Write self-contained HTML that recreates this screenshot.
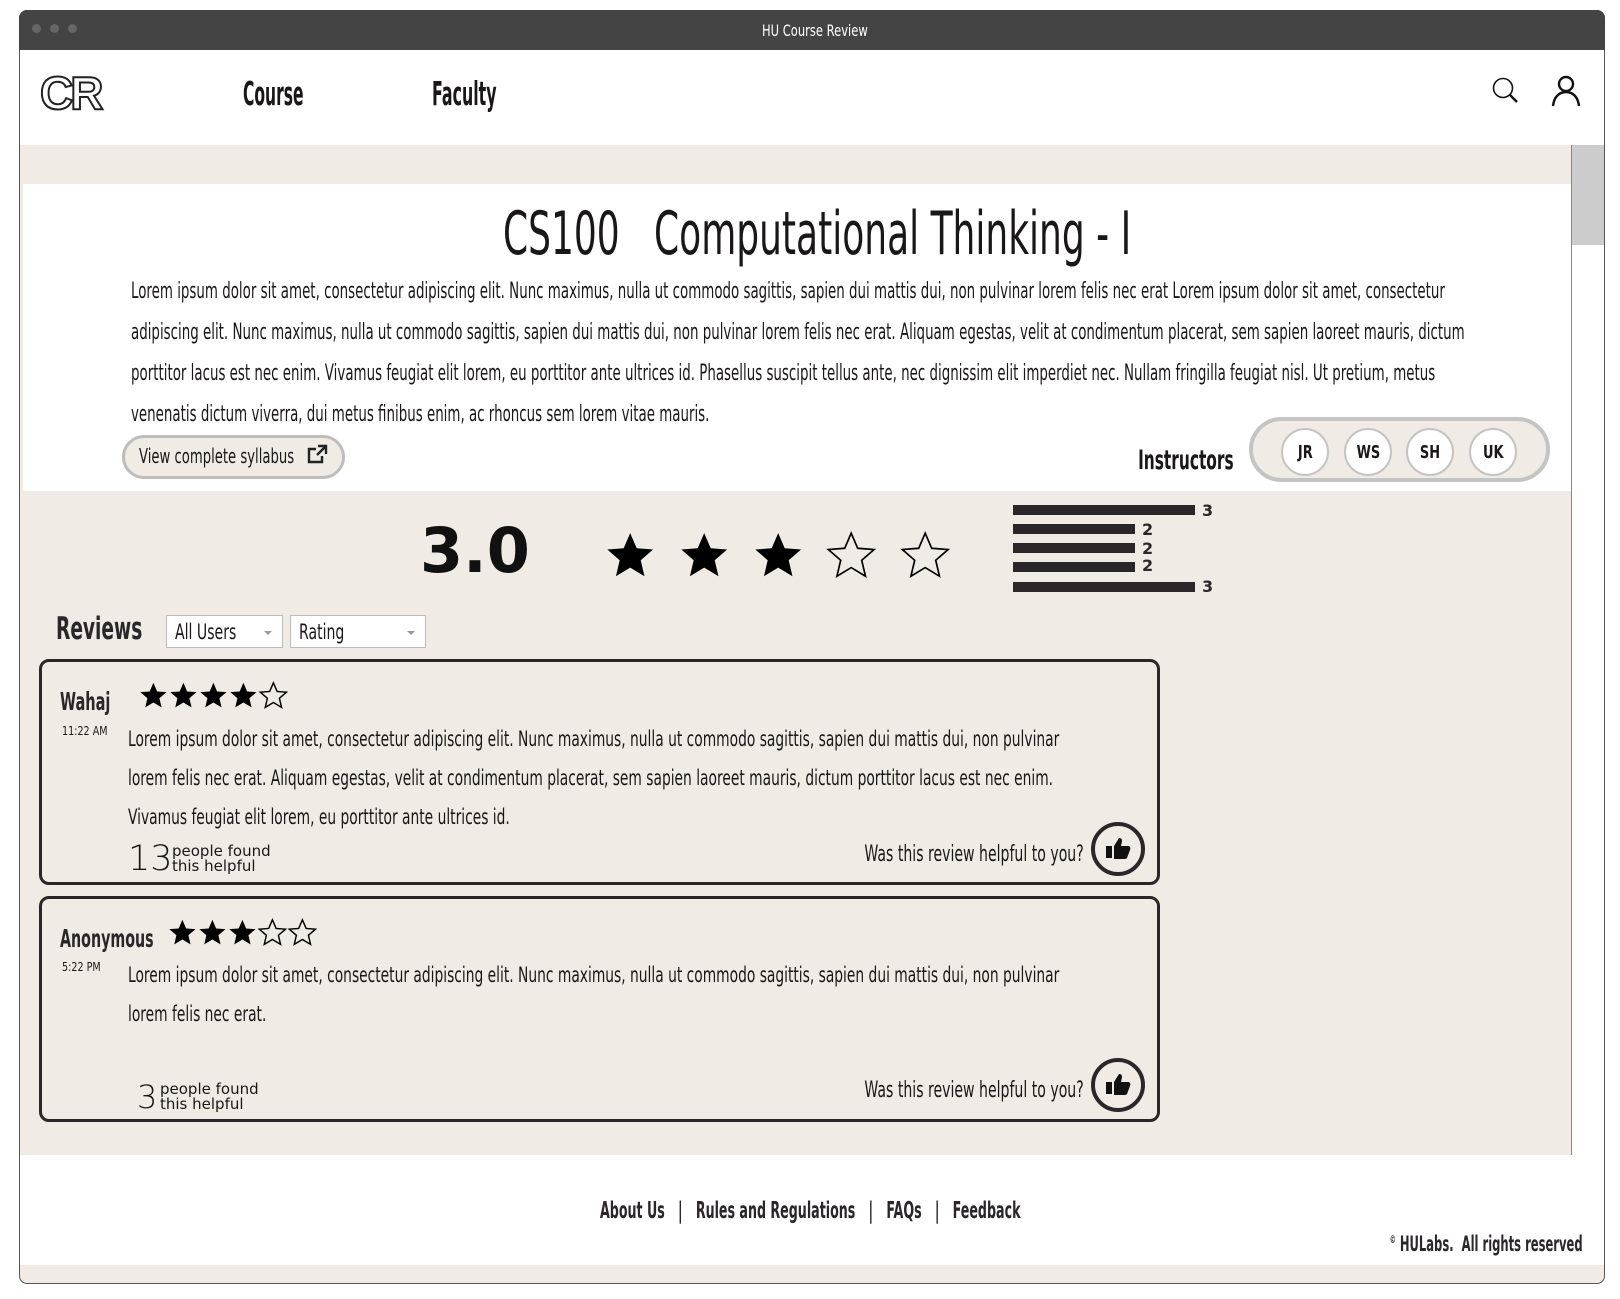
<!DOCTYPE html>
<html><head><meta charset="utf-8"><style>
*{margin:0;padding:0;box-sizing:border-box}
body{width:1620px;height:1299px;background:#fff;position:relative;overflow:hidden;font-family:"DejaVu Sans","Liberation Sans",sans-serif;color:#1a1718}
.a{position:absolute;white-space:nowrap;transform-origin:0 0}
.r{transform-origin:100% 0}
.b{font-weight:bold}
.line{font-size:22px;transform:scaleX(0.609)}
.rl{font-size:21px;transform:scaleX(0.658)}
.circ{position:absolute;width:48px;height:48px;border-radius:50%;background:#fff;border:2px solid #c4c4c4;display:flex;align-items:center;justify-content:center;top:429px}
.circ span{font-size:18px;font-weight:bold;display:inline-block;transform:scaleX(0.72)}
.bar{position:absolute;left:1013px;height:10px;background:#2a2629}
.bn{position:absolute;font-weight:bold;font-size:16px;color:#2a2629}
.card{position:absolute;left:39px;width:1121px;border:3px solid #2a2629;border-radius:10px;background:#f0ebe4}
.thumb{position:absolute;width:54px;height:54px;border:4px solid #2a2629;border-radius:50%;display:flex;align-items:center;justify-content:center}
.dd{position:absolute;top:615px;height:33px;background:#fff;border:1px solid #bbb}
.dd span{position:absolute;left:8px;top:4px;font-size:21px;transform:scaleX(0.67);transform-origin:0 0;white-space:nowrap}
.dd:after{content:"";position:absolute;right:10px;top:15px;border:4px solid transparent;border-top:4px solid #999}
</style></head><body>
<svg width="0" height="0" style="position:absolute"><defs>
<path id="st" d="M12 1.5l3.1 7.2 7.8.6-5.9 5.1 1.8 7.6L12 17.9 5.2 22l1.8-7.6L1.1 9.3l7.8-.6z"/>
</defs></svg>
<div class="a" style="left:19px;top:10px;width:1586px;height:1274px;border:1px solid #555;border-radius:8px;background:#f0ebe4"></div>
<div class="a" style="left:19px;top:10px;width:1586px;height:40px;background:#444;border-radius:8px 8px 0 0"></div>
<div class="a" style="left:32px;top:24px;width:9px;height:9px;border-radius:50%;background:#666"></div>
<div class="a" style="left:50px;top:24px;width:9px;height:9px;border-radius:50%;background:#666"></div>
<div class="a" style="left:68px;top:24px;width:9px;height:9px;border-radius:50%;background:#666"></div>
<div class="a" style="left:762px;top:21px;color:#fff;font-size:16px;transform:scaleX(0.72)">HU Course Review</div>
<div class="a" style="left:20px;top:50px;width:1584px;height:95px;background:#fff"></div>
<div class="a b" style="left:40px;top:66px;font-size:46px;color:#fff;-webkit-text-stroke:2px #222;font-family:'Liberation Sans',sans-serif;letter-spacing:-3px">CR</div>
<div class="a b" style="left:243px;top:74px;font-size:33px;transform:scaleX(0.47)">Course</div>
<div class="a b" style="left:432px;top:74px;font-size:33px;transform:scaleX(0.48)">Faculty</div>
<svg class="a" style="left:1491px;top:76px" width="30" height="30" viewBox="0 0 30 30"><circle cx="12" cy="12" r="9.5" fill="none" stroke="#111" stroke-width="1.6"/><path d="M19 19l7 7" stroke="#111" stroke-width="2.4"/></svg>
<svg class="a" style="left:1550px;top:74px" width="32" height="34" viewBox="0 0 32 34"><circle cx="16" cy="10" r="7" fill="none" stroke="#111" stroke-width="2.4"/><path d="M3 32c1-9 6-14 13-14s12 5 13 14" fill="none" stroke="#111" stroke-width="2.4"/></svg>
<div class="a" style="left:1571px;top:145px;width:1px;height:1010px;background:#888"></div>
<div class="a" style="left:1572px;top:145px;width:32px;height:1010px;background:#fff"></div>
<div class="a" style="left:1572px;top:145px;width:32px;height:100px;background:#ccc"></div>
<div class="a" style="left:23px;top:184px;width:1548px;height:307px;background:#fff"></div>
<div class="a" style="left:503px;top:199px;font-size:60px;transform:scaleX(0.60)">CS100 &nbsp; Computational Thinking - I</div>
<div class="a line" style="left:131px;top:279px">Lorem ipsum dolor sit amet, consectetur adipiscing elit. Nunc maximus, nulla ut commodo sagittis, sapien dui mattis dui, non pulvinar lorem felis nec erat Lorem ipsum dolor sit amet, consectetur</div>
<div class="a line" style="left:131px;top:320px">adipiscing elit. Nunc maximus, nulla ut commodo sagittis, sapien dui mattis dui, non pulvinar lorem felis nec erat. Aliquam egestas, velit at condimentum placerat, sem sapien laoreet mauris, dictum</div>
<div class="a line" style="left:131px;top:361px">porttitor lacus est nec enim. Vivamus feugiat elit lorem, eu porttitor ante ultrices id. Phasellus suscipit tellus ante, nec dignissim elit imperdiet nec. Nullam fringilla feugiat nisl. Ut pretium, metus</div>
<div class="a line" style="left:131px;top:402px">venenatis dictum viverra, dui metus finibus enim, ac rhoncus sem lorem vitae mauris.</div>
<div class="a" style="left:122px;top:435px;width:223px;height:44px;border:3px solid #bdbdbd;border-radius:22px;background:#f0ebe4"></div>
<div class="a" style="left:139px;top:444px;font-size:20px;transform:scaleX(0.66)">View complete syllabus</div>
<svg class="a" style="left:306px;top:444px" width="22" height="22" viewBox="0 0 22 22"><path d="M16 12v6H3V5h7" fill="none" stroke="#222" stroke-width="2.4"/><path d="M12 2h8v8M20 2l-9 9" fill="none" stroke="#222" stroke-width="2.4"/></svg>
<div class="a b r" style="right:386px;top:445px;font-size:27px;transform:scaleX(0.57)">Instructors</div>
<div class="a" style="left:1249px;top:417px;width:301px;height:65px;border:4px solid #c4c4c4;border-radius:33px;background:#f0ebe4"></div>
<div class="circ" style="left:1281px;top:428px"><span>JR</span></div>
<div class="circ" style="left:1344px;top:428px"><span>WS</span></div>
<div class="circ" style="left:1406px;top:428px"><span>SH</span></div>
<div class="circ" style="left:1469px;top:428px"><span>UK</span></div>
<div class="a b" style="left:420px;top:514px;font-size:62px;color:#111">3.0</div>
<svg class="a" style="left:603px;top:528px" width="350" height="54" viewBox="0 0 350 54">
<g transform="translate(2,2) scale(2.1)"><use href="#st" fill="#000"/></g>
<g transform="translate(76,2) scale(2.1)"><use href="#st" fill="#000"/></g>
<g transform="translate(150,2) scale(2.1)"><use href="#st" fill="#000"/></g>
<g transform="translate(223,2) scale(2.1)"><use href="#st" fill="none" stroke="#000" stroke-width="0.8"/></g>
<g transform="translate(297,2) scale(2.1)"><use href="#st" fill="none" stroke="#000" stroke-width="0.8"/></g>
</svg>
<div class="bar" style="top:505px;width:182px"></div><div class="bn" style="left:1202px;top:501px">3</div>
<div class="bar" style="top:524px;width:122px"></div><div class="bn" style="left:1142px;top:520px">2</div>
<div class="bar" style="top:543px;width:122px"></div><div class="bn" style="left:1142px;top:539px">2</div>
<div class="bar" style="top:562px;width:122px"></div><div class="bn" style="left:1142px;top:556px">2</div>
<div class="bar" style="top:582px;width:182px"></div><div class="bn" style="left:1202px;top:577px">3</div>
<div class="a b" style="left:56px;top:611px;font-size:31px;color:#2a2629;transform:scaleX(0.6)">Reviews</div>
<div class="dd" style="left:166px;width:117px"><span>All Users</span></div>
<div class="dd" style="left:290px;width:136px"><span>Rating</span></div>

<div class="card" style="top:659px;height:226px"></div>
<div class="a b" style="left:60px;top:687px;font-size:25px;color:#2a2629;transform:scaleX(0.58)">Wahaj</div>
<div class="a" style="left:62px;top:724px;font-size:12px;transform:scaleX(0.8)">11:22 AM</div>
<svg class="a" style="left:139px;top:680px" width="150" height="30" viewBox="0 0 150 30">
<g transform="translate(0,1) scale(1.2)"><use href="#st"/></g><g transform="translate(30,1) scale(1.2)"><use href="#st"/></g><g transform="translate(60,1) scale(1.2)"><use href="#st"/></g><g transform="translate(90,1) scale(1.2)"><use href="#st"/></g><g transform="translate(120,1) scale(1.2)"><use href="#st" fill="none" stroke="#000" stroke-width="1.2"/></g></svg>
<div class="a rl" style="left:128px;top:727px">Lorem ipsum dolor sit amet, consectetur adipiscing elit. Nunc maximus, nulla ut commodo sagittis, sapien dui mattis dui, non pulvinar</div>
<div class="a rl" style="left:128px;top:766px">lorem felis nec erat. Aliquam egestas, velit at condimentum placerat, sem sapien laoreet mauris, dictum porttitor lacus est nec enim.</div>
<div class="a rl" style="left:128px;top:805px">Vivamus feugiat elit lorem, eu porttitor ante ultrices id.</div>
<div class="a" style="left:128px;top:839px;font-size:35px;font-weight:300">13</div>
<div class="a" style="left:172px;top:844px;font-size:15px;line-height:15px">people found<br>this helpful</div>
<div class="a r" style="right:536px;top:842px;font-size:22px;transform:scaleX(0.64)">Was this review helpful to you?</div>
<div class="thumb" style="left:1091px;top:822px"><svg width="30" height="28" viewBox="0 0 30 28"><rect x="3" y="11" width="6" height="12" fill="#111"/><path d="M11 11l5-8c2 0 3 1 3 3l-1 5h7c2 0 3 2 2 4l-3 8c-1 1-2 1-3 1H11z" fill="#111"/></svg></div>

<div class="card" style="top:896px;height:226px"></div>
<div class="a b" style="left:60px;top:924px;font-size:25px;color:#2a2629;transform:scaleX(0.57)">Anonymous</div>
<div class="a" style="left:62px;top:960px;font-size:12px;transform:scaleX(0.8)">5:22 PM</div>
<svg class="a" style="left:168px;top:917px" width="150" height="30" viewBox="0 0 150 30">
<g transform="translate(0,1) scale(1.2)"><use href="#st"/></g><g transform="translate(30,1) scale(1.2)"><use href="#st"/></g><g transform="translate(60,1) scale(1.2)"><use href="#st"/></g><g transform="translate(90,1) scale(1.2)"><use href="#st" fill="none" stroke="#000" stroke-width="1.2"/></g><g transform="translate(120,1) scale(1.2)"><use href="#st" fill="none" stroke="#000" stroke-width="1.2"/></g></svg>
<div class="a rl" style="left:128px;top:963px">Lorem ipsum dolor sit amet, consectetur adipiscing elit. Nunc maximus, nulla ut commodo sagittis, sapien dui mattis dui, non pulvinar</div>
<div class="a rl" style="left:128px;top:1002px">lorem felis nec erat.</div>
<div class="a" style="left:137px;top:1078px;font-size:32px;font-weight:300">3</div>
<div class="a" style="left:160px;top:1082px;font-size:15px;line-height:15px">people found<br>this helpful</div>
<div class="a r" style="right:536px;top:1078px;font-size:22px;transform:scaleX(0.64)">Was this review helpful to you?</div>
<div class="thumb" style="left:1091px;top:1058px"><svg width="30" height="28" viewBox="0 0 30 28"><rect x="3" y="11" width="6" height="12" fill="#111"/><path d="M11 11l5-8c2 0 3 1 3 3l-1 5h7c2 0 3 2 2 4l-3 8c-1 1-2 1-3 1H11z" fill="#111"/></svg></div>
<div class="a" style="left:20px;top:1155px;width:1584px;height:110px;background:#fff"></div>
<div class="a b" style="left:600px;top:1198px;font-size:23px;color:#2a2629;transform:scaleX(0.55)">About Us &nbsp;&nbsp;| &nbsp;&nbsp;Rules and Regulations &nbsp;&nbsp;| &nbsp;&nbsp;FAQs &nbsp;&nbsp;| &nbsp;&nbsp;Feedback</div>
<div class="a b r" style="right:37px;top:1232px;font-size:21px;color:#2a2629;transform:scaleX(0.55)"><sup style="font-size:11px">©</sup> HULabs.&nbsp; All rights reserved</div>
</body></html>
